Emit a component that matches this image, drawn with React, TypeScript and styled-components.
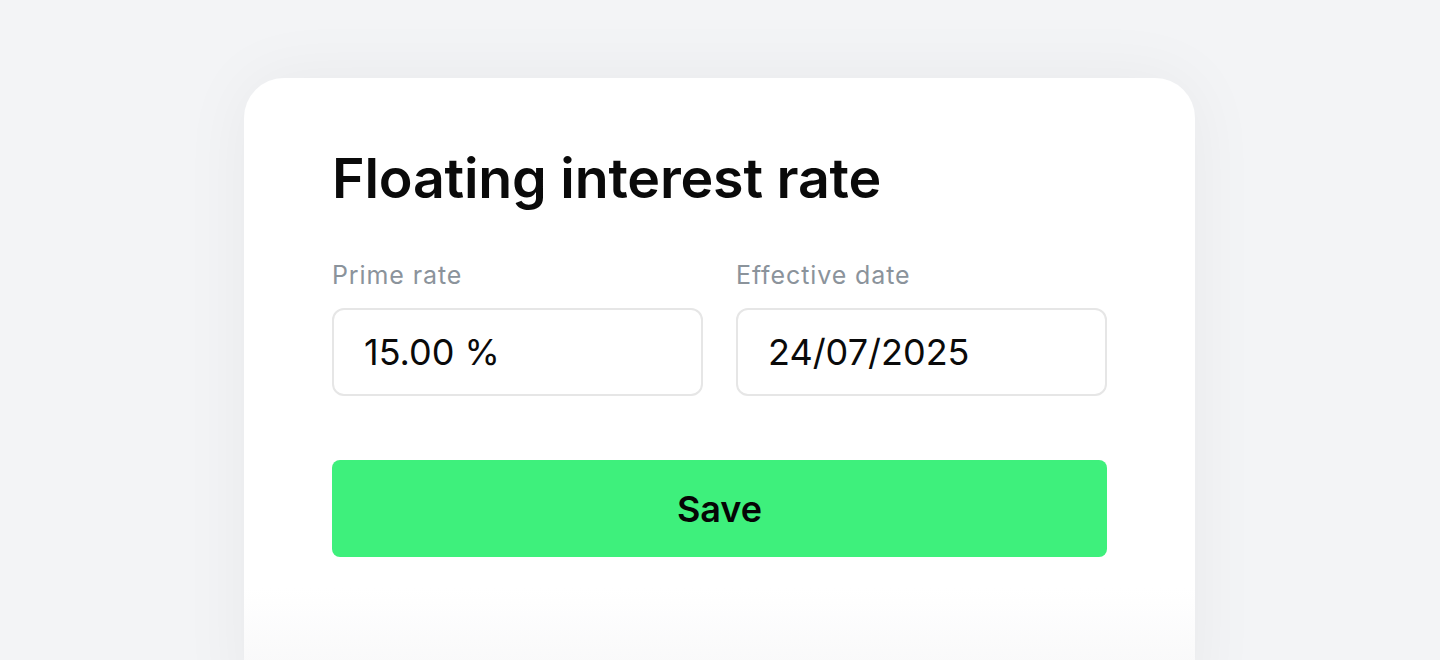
import React from "react";
import styled, { createGlobalStyle } from "styled-components";

const Global = createGlobalStyle`
  html, body { margin: 0; padding: 0; }
  body {
    background: #f3f4f6;
    font-family: Inter, "Noto Sans", "Liberation Sans", sans-serif;
    height: 660px;
    overflow: hidden;
  }
  * { box-sizing: border-box; }
`;

const Page = styled.div`
  height: 660px;
  padding: 78px 0 0 244px;
  overflow: hidden;
`;

const Card = styled.div`
  width: 951px;
  height: 640px;
  border-radius: 40px;
  background: linear-gradient(to bottom, #ffffff 0, #ffffff 510px, #f8f8f9 600px);
  box-shadow: 0 0 70px rgba(0, 0, 0, 0.05);
  padding: 64px 88px 0 88px;
`;

const Title = styled.h1`
  margin: 0;
  font-size: 55.5px;
  font-weight: 600;
  line-height: 72px;
  color: #0a0a0a;
  letter-spacing: -0.2px;
`;

const Fields = styled.div`
  display: grid;
  grid-template-columns: 1fr 1fr;
  column-gap: 33px;
  margin-top: 45px;
`;

const Field = styled.div`
  display: flex;
  flex-direction: column;
`;

const Label = styled.label`
  font-size: 25px;
  line-height: 32px;
  letter-spacing: 0.9px;
  color: #8b939b;
  margin-bottom: 17px;
`;

const Input = styled.div`
  height: 88px;
  border: 2px solid #e6e6e6;
  border-radius: 12px;
  display: flex;
  align-items: center;
  padding: 0 30px;
  font-size: 36px;
  color: #0a0a0a;
`;

const SaveButton = styled.button`
  margin-top: 64px;
  width: 100%;
  height: 97px;
  border: none;
  border-radius: 8px;
  background: #3ef07c;
  color: #050505;
  font-family: inherit;
  font-size: 36px;
  font-weight: 600;
  cursor: pointer;
`;

export default function App() {
  return (
    <>
      <Global />
      <Page>
        <Card>
          <Title>Floating interest rate</Title>
          <Fields>
            <Field>
              <Label>Prime rate</Label>
              <Input>15.00 %</Input>
            </Field>
            <Field>
              <Label>Effective date</Label>
              <Input>24/07/2025</Input>
            </Field>
          </Fields>
          <SaveButton>Save</SaveButton>
        </Card>
      </Page>
    </>
  );
}
